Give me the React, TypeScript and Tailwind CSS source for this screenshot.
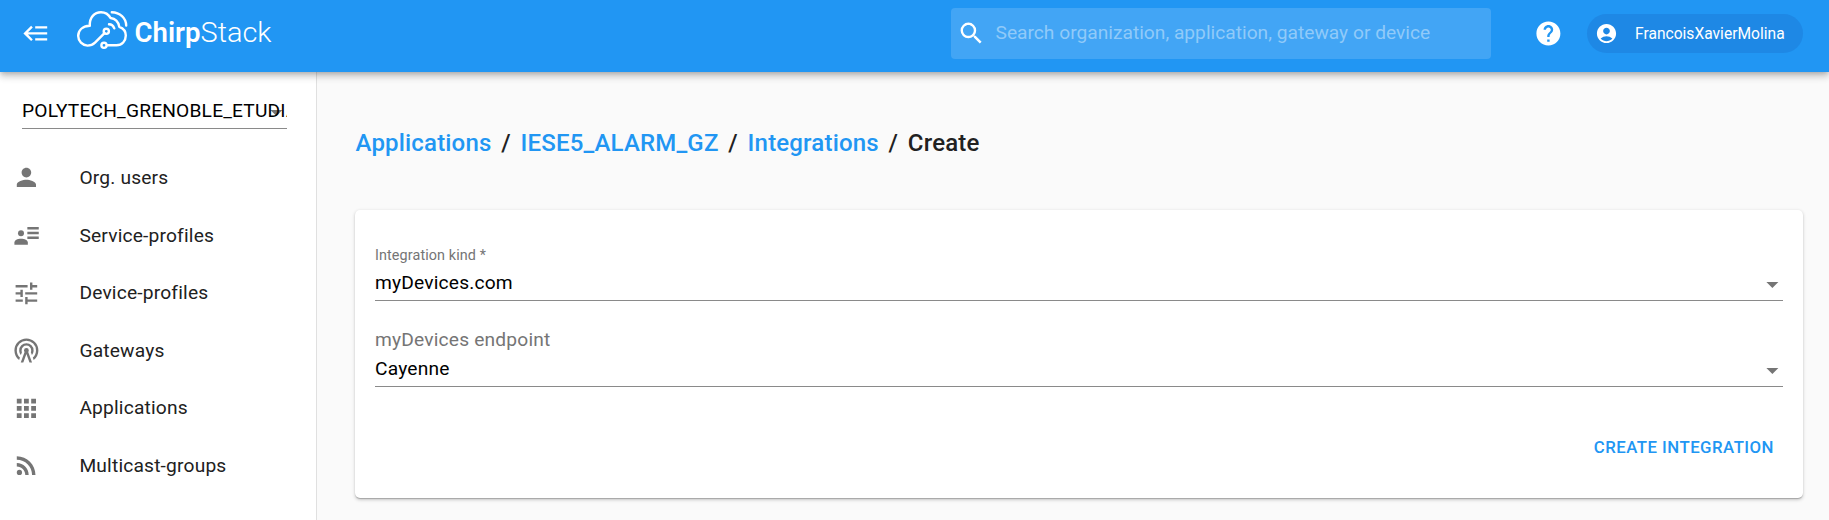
import React from "react";
import { MdPerson, MdTune, MdApps, MdRssFeed, MdSearch, MdHelp, MdAccountCircle } from "react-icons/md";

const FONT = "font-['Roboto','Noto_Sans',sans-serif]";

function MenuBackIcon() {
  return (
    <svg viewBox="0 0 24 24" className="size-[28.8px]" fill="currentColor">
      <path d="M5,13L9,17L7.6,18.42L1.18,12L7.6,5.58L9,7L5,11H21V13H5M21,6V8H11V6H21M21,16V18H11V16H21Z" />
    </svg>
  );
}

function AccountDetailsIcon() {
  return (
    <svg viewBox="0 0 24 24" className="size-[28.8px]" fill="currentColor">
      <path d="M22.300 5v2h-9.500V5zM22.300 9v2h-9.500V9zM22.300 13v2h-9.500v-2z" />
      <circle cx="7.5" cy="10.3" r="2.5" />
      <path d="M2 19.800v-1.800C2 16 4.500 14.800 7.500 14.800s5.700 1.200 5.700 3.200V19.800z" />
    </svg>
  );
}

function RadioTowerIcon() {
  return (
    <svg viewBox="0 0 24 24" className="size-[28.8px]" fill="currentColor">
      <path d="M12,10A2,2 0 0,1 14,12C14,12.5 13.82,12.94 13.53,13.29L16.7,22H14.57L12,14.93L9.43,22H7.3L10.47,13.29C10.18,12.94 10,12.5 10,12A2,2 0 0,1 12,10M12,8A4,4 0 0,0 8,12C8,12.5 8.1,13 8.28,13.46L7.4,15.86C6.53,14.81 6,13.47 6,12A6,6 0 0,1 12,6A6,6 0 0,1 18,12C18,13.47 17.47,14.81 16.6,15.86L15.72,13.46C15.9,13 16,12.5 16,12A4,4 0 0,0 12,8M12,4A8,8 0 0,0 4,12C4,14.36 5,16.5 6.64,17.94L5.92,19.94C3.54,18.11 2,15.23 2,12A10,10 0 0,1 12,2A10,10 0 0,1 22,12C22,15.23 20.46,18.11 18.08,19.94L17.36,17.94C19,16.5 20,14.36 20,12A8,8 0 0,0 12,4Z" />
    </svg>
  );
}

function Logo() {
  return (
    <svg viewBox="74 6 200 44" className="ml-[23.2px] h-[44px] w-[200px]" fill="none" stroke="#fff" strokeWidth="2.4" strokeLinecap="round" strokeLinejoin="round">
      <path d="M104.500 33.200 95 42.700Q92 45.600 87.500 45.600A9.700 9.700 0 0 1 78.200 36C78.200 30.500 82 26.300 89.800 25.800C89.300 17.500 94.500 12.200 101 12.200C105.500 12.200 108.500 14.300 110.500 18C115 18.500 118.300 21.500 119.300 26.800C123.500 28.300 125.800 31.500 125.800 35.500C125.800 41 122 45.300 116.500 45.300H107" />
      <circle cx="106.300" cy="31.300" r="2.600" />
      <circle cx="104" cy="45.300" r="2.600" />
      <path d="M109 24.200Q112.800 24.300 114.300 28.300M111.800 12.200C120 12.500 126 18 126.200 25.500" />
      <g fill="#fff" stroke="none" className={FONT} fontSize="28.500">
        <text x="134.500" y="42.300" fontWeight="600" textLength="66" lengthAdjust="spacingAndGlyphs">Chirp</text>
        <text x="200.500" y="42.300" fontWeight="300" textLength="71" lengthAdjust="spacingAndGlyphs">Stack</text>
      </g>
    </svg>
  );
}

function Caret() {
  return (
    <svg viewBox="0 0 24 24" className="absolute right-[-4px] bottom-[1px] size-[28.8px] text-[#757575]" fill="currentColor">
      <path d="M7 10l5 5 5-5z" />
    </svg>
  );
}

function Select({ value }: { value: string }) {
  return (
    <div className="relative h-[35px] overflow-hidden border-b border-[#8a8a8a] pt-[5px] text-[19.2px] leading-[24px] tracking-[0.18px] whitespace-nowrap text-black">
      <Caret />
      <span className="relative">{value}</span>
    </div>
  );
}

const items = [
  { label: "Org. users", icon: <MdPerson className="size-[28.8px]" /> },
  { label: "Service-profiles", icon: <AccountDetailsIcon /> },
  { label: "Device-profiles", icon: <MdTune className="size-[28.8px]" /> },
  { label: "Gateways", icon: <RadioTowerIcon /> },
  { label: "Applications", icon: <MdApps className="size-[28.8px]" /> },
  { label: "Multicast-groups", icon: <MdRssFeed className="size-[28.8px]" /> },
];

const crumbs = ["Applications", "IESE5_ALARM_GZ", "Integrations"];

export default function App() {
  return (
    <div className={`flex h-[520px] w-full flex-col overflow-hidden bg-[#fafafa] ${FONT}`}>
      <header className="relative z-10 flex h-[72px] shrink-0 items-start bg-[#2196f3] pr-[26px] text-white shadow-[0_2.4px_4.8px_-1.2px_rgba(0,0,0,0.2),0_4.8px_6px_0_rgba(0,0,0,0.14),0_1.2px_12px_0_rgba(0,0,0,0.12)]">
        <div className="flex flex-1 items-start pl-[22px]">
          <div className="pt-[19px]"><MenuBackIcon /></div>
          <div className="pt-[6px]"><Logo /></div>
        </div>
        <div className="mt-[8px] flex h-[51px] w-[540px] items-center rounded-[4px] bg-[#42a5f5] pl-[6px]">
          <MdSearch className="size-[28.8px]" />
          <span className="ml-[9.500px] text-[19.2px] whitespace-nowrap text-[#90caf9]">Search organization, application, gateway or device</span>
        </div>
        <MdHelp className="mt-[19px] ml-[43px] size-[28.8px]" />
        <div className="mt-[14px] ml-[24px] flex h-[39px] w-[216px] items-center rounded-full bg-[#1e88e5]">
          <MdAccountCircle className="ml-[8px] size-[23px]" />
          <span className="ml-[17px] pt-[2px] text-[15.6px]">FrancoisXavierMolina</span>
        </div>
      </header>
      <div className="flex min-h-0 flex-1">
        <aside className="w-[317px] shrink-0 border-r border-[#e0e0e0] bg-white">
          <div className="ml-[22px] w-[265px] pt-[22px]">
            <Select value="POLYTECH_GRENOBLE_ETUDIANTS" />
          </div>
          <nav className="mt-[20px]">
            {items.map((it) => (
              <div key={it.label} className="flex h-[57.6px] items-center pl-[12px] text-[#757575]">
                {it.icon}
                <span className="ml-[38.6px] pt-[1.4px] text-[19.2px] tracking-[0.18px] text-[#212121]">{it.label}</span>
              </div>
            ))}
          </nav>
        </aside>
        <main className="flex-1 pr-[26px] pl-[38px]">
          <h1 className="flex h-[138px] pt-[54px] pl-[0.5px] text-[24px] leading-[34px] font-medium tracking-[0.18px] text-[#212121]">
            {crumbs.map((c) => (
              <React.Fragment key={c}>
                <span className="text-[#2196f3]">{c}</span>
                <span className="mx-[9.75px]">/</span>
              </React.Fragment>
            ))}
            <span>Create</span>
          </h1>
          <section className="h-[288px] rounded-[5px] bg-white px-[20px] pt-[35px] shadow-[0_1.2px_3.6px_0_rgba(0,0,0,0.2),0_1px_1px_0_rgba(0,0,0,0.14),0_2px_1px_-1px_rgba(0,0,0,0.08)]">
            <div className="h-[21px] text-[14.4px] leading-[21px] tracking-[0.1px] text-[#757575]">Integration kind *</div>
            <Select value="myDevices.com" />
            <div className="mt-[26px] h-[25px] text-[19.2px] leading-[26px] tracking-[0.18px] text-[#757575]">myDevices endpoint</div>
            <Select value="Cayenne" />
            <div className="mt-[46px] pr-[9px] text-right text-[16.8px] leading-[29px] font-medium tracking-[0.48px] text-[#2196f3]">CREATE INTEGRATION</div>
          </section>
        </main>
      </div>
    </div>
  );
}
